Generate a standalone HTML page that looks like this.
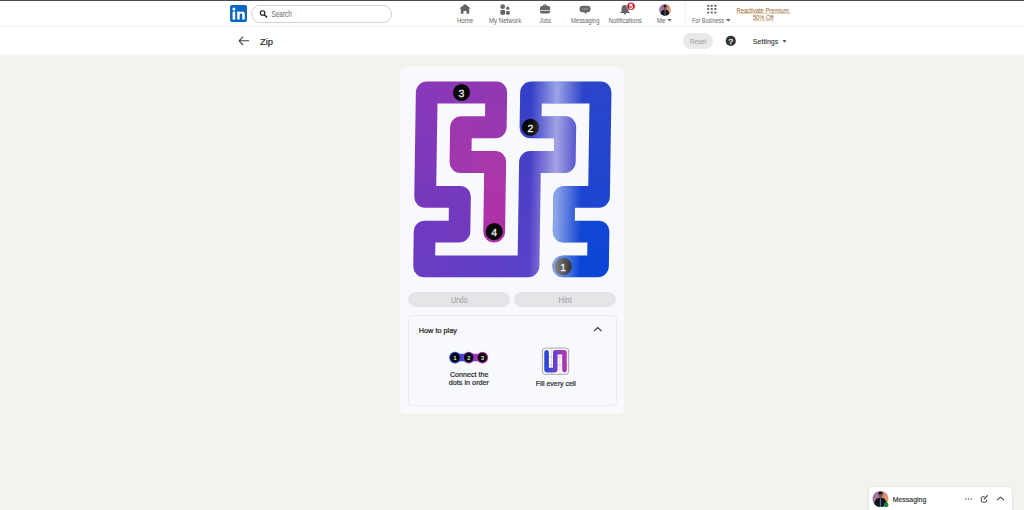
<!DOCTYPE html>
<html><head><meta charset="utf-8">
<style>
*{margin:0;padding:0;box-sizing:border-box}
html,body{width:1024px;height:510px;overflow:hidden;background:#f4f2ee;font-family:"Liberation Sans",sans-serif;position:relative}
.abs{position:absolute}
svg text{font-family:"Liberation Sans",sans-serif}
</style></head>
<body>
<div class="abs" style="left:0;top:0;width:1024px;height:1px;background:#4b4a50"></div>
<div class="abs" style="left:0;top:1px;width:1024px;height:26px;background:#fff;border-bottom:1px solid #f2f2f2"></div>
<div class="abs" style="left:0;top:27px;width:1024px;height:28px;background:#fff;border-bottom:1px solid #f8f7f5"></div>
<div class="abs" style="left:251px;top:5px;width:141px;height:18px;border:1px solid #d2d2d2;border-radius:9px;background:#fff"></div>
<div class="abs" style="left:400px;top:67px;width:224px;height:347px;background:#f7f9fc;border-radius:5px"></div>
<div class="abs" style="left:408.3px;top:291.5px;width:101.7px;height:15.6px;background:#e5e5e7;border-radius:8px"></div>
<div class="abs" style="left:514.4px;top:291.5px;width:101.6px;height:15.6px;background:#e5e5e7;border-radius:8px"></div>
<div class="abs" style="left:408px;top:315px;width:208.5px;height:90.5px;border:1px solid #ebecef;border-radius:3.5px"></div>
<div class="abs" style="left:869px;top:487px;width:143px;height:30px;background:#fff;border-radius:4px;box-shadow:0 0 2px rgba(0,0,0,0.2)"></div>
<div class="abs" style="left:683.4px;top:33px;width:29.4px;height:15.8px;border-radius:8px;background:#e9e9e9"></div>

<svg class="abs" style="left:0;top:0" width="1024" height="510" viewBox="0 0 1024 510">
<defs>
<linearGradient id="sky" x1="0" y1="0" x2="1" y2="0.5"><stop offset="0" stop-color="#6a70d0"/><stop offset="0.45" stop-color="#b87898"/><stop offset="1" stop-color="#f0a060"/></linearGradient>
<clipPath id="av1"><circle cx="665" cy="9.9" r="5.9"/></clipPath>
<clipPath id="av2"><circle cx="880.5" cy="499" r="8"/></clipPath>
<linearGradient id="cg" x1="0" x2="1"><stop offset="0" stop-color="#1a4ad8"/><stop offset="0.5" stop-color="#7040c8"/><stop offset="1" stop-color="#c030b0"/></linearGradient>
<linearGradient id="fg" gradientUnits="userSpaceOnUse" x1="544" y1="0" x2="567" y2="0"><stop offset="0" stop-color="#1e48d8"/><stop offset="0.5" stop-color="#7040c8"/><stop offset="1" stop-color="#c030b0"/></linearGradient>
</defs>

<!-- logo -->
<rect x="230" y="5" width="17" height="17" rx="2" fill="#0a66c2"/>
<rect x="232.6" y="11.6" width="2.6" height="8" fill="#fff"/>
<circle cx="233.9" cy="8.9" r="1.5" fill="#fff"/>
<path d="M237.2 11.6h2.5v1.1c0.5-0.8 1.4-1.3 2.5-1.3 2 0 2.6 1.2 2.6 3.2v5h-2.6v-4.4c0-1-0.2-1.7-1.1-1.7-1 0-1.4 0.7-1.4 1.8v4.3h-2.5z" fill="#fff"/>

<!-- search icon/text -->
<circle cx="262.6" cy="13.05" r="2.25" fill="none" stroke="#1a1a1a" stroke-width="1.1"/>
<path d="M264.4 14.8L266.6 17" stroke="#1a1a1a" stroke-width="1.4" stroke-linecap="round"/>
<text x="271.5" y="16.8" font-size="8.4" textLength="20.4" lengthAdjust="spacingAndGlyphs" fill="#666">Search</text>

<!-- nav icons -->
<g fill="#666">
<path d="M465 4.1 L470.8 8.4 L469.2 8.4 L469.2 13.8 L466.5 13.8 L466.5 10.9 L463.5 10.9 L463.5 13.8 L460.8 13.8 L460.8 8.4 L459.2 8.4 Z"/>
<circle cx="502.7" cy="6.7" r="2.4"/>
<circle cx="507.8" cy="8.2" r="1.6"/>
<rect x="500.4" y="10.1" width="4.7" height="4.6" rx="1.2"/>
<rect x="506" y="11" width="3.8" height="3.7" rx="1.1"/>
<path d="M542.9 6.6v-0.6c0-1 0.8-1.7 2.1-1.7s2.1 0.7 2.1 1.7v0.6h-1.1v-0.5c0-0.4-0.4-0.7-1-0.7s-1 0.3-1 0.7v0.5z"/>
<rect x="540" y="6.1" width="10.1" height="7.3" rx="1.6"/>
<rect x="579.5" y="5.8" width="11.1" height="6.5" rx="3.25"/>
<path d="M584.6 12h2.4l-2 2.3z"/>
<path d="M625 5c2.3 0 3.4 1.7 3.4 3.8v2.4l1.8 1.8h-10.4l1.8-1.8v-2.4c0-2.1 1.1-3.8 3.4-3.8z"/>
<rect x="624" y="13" width="2" height="1.4" rx="0.6"/>
<rect x="707.2" y="4.7" width="2" height="2" rx="0.5"/><rect x="710.7" y="4.7" width="2" height="2" rx="0.5"/><rect x="714.4" y="4.7" width="2" height="2" rx="0.5"/>
<rect x="707.2" y="8" width="2" height="2" rx="0.5"/><rect x="710.7" y="8" width="2" height="2" rx="0.5"/><rect x="714.4" y="8" width="2" height="2" rx="0.5"/>
<rect x="707.2" y="11.5" width="2" height="2" rx="0.5"/><rect x="710.7" y="11.5" width="2" height="2" rx="0.5"/><rect x="714.4" y="11.5" width="2" height="2" rx="0.5"/>
</g>
<path d="M581.9 9.1h6.1" stroke="#a8a8a8" stroke-width="1.3" stroke-dasharray="1.6 0.45"/>
<path d="M540 10.5h10.1" stroke="#fff" stroke-width="0.7"/>
<circle cx="631" cy="6.3" r="4.3" fill="#fff"/>
<circle cx="631" cy="6.3" r="3.8" fill="#cb112d"/>
<text x="631" y="8.85" text-anchor="middle" font-size="6.6" stroke="#fff" stroke-width="0.35" fill="#fff">5</text>
<g clip-path="url(#av1)">
<rect x="659" y="4" width="12" height="12" fill="url(#sky)"/>
<path d="M660.4 16.5c0-3.6 0.8-6 2.9-6.8h3.4c2.1 0.8 2.9 3.2 2.9 6.8z" fill="#141414"/>
<ellipse cx="665" cy="7.7" rx="1.5" ry="1.9" fill="#7a5a48"/>
<path d="M663.5 7c0-1.5 0.7-1.9 1.5-1.9s1.5 0.4 1.5 1.9z" fill="#1a1410"/>
<rect x="664.6" y="9.8" width="0.9" height="7" fill="#3d79b8"/>
</g>
<path d="M685.3 2.5V26" stroke="#ebebeb" stroke-width="1"/>
<path d="M667.3 19.1h4.4l-2.2 2.4z" fill="#666"/>
<path d="M726 19.1h4.6l-2.3 2.6z" fill="#666"/>
<g fill="#666" text-anchor="middle">
<text x="465" y="22.75" font-size="6.6" textLength="16.2" lengthAdjust="spacingAndGlyphs">Home</text>
<text x="505.1" y="22.75" font-size="6.6" textLength="32.2" lengthAdjust="spacingAndGlyphs">My Network</text>
<text x="545.2" y="22.75" font-size="6.6" textLength="11.6" lengthAdjust="spacingAndGlyphs">Jobs</text>
<text x="585.2" y="22.75" font-size="6.6" textLength="28.4" lengthAdjust="spacingAndGlyphs">Messaging</text>
<text x="625.2" y="22.75" font-size="6.6" textLength="33.5" lengthAdjust="spacingAndGlyphs">Notifications</text>
<text x="661.1" y="22.75" font-size="6.6" textLength="8.4" lengthAdjust="spacingAndGlyphs">Me</text>
<text x="708" y="22.65" font-size="6.6" textLength="32" lengthAdjust="spacingAndGlyphs">For Business</text>
</g>
<g fill="#94621f" text-anchor="middle" font-size="6.5">
<text x="763.35" y="12.6" textLength="53.7" lengthAdjust="spacingAndGlyphs">Reactivate Premium:</text>
<text x="763.3" y="19.7" textLength="20.8" lengthAdjust="spacingAndGlyphs">50% Off</text>
</g>
<path d="M736.5 13.5H790.2M752.9 20.7H773.7" stroke="#d4b58c" stroke-width="0.6"/>

<!-- sub header -->
<path d="M239 40.8H249M239 40.8L243.1 36.7M239 40.8L243.1 45" fill="none" stroke="#404040" stroke-width="1.1"/>
<text x="260" y="44.6" font-size="9.2" textLength="13" lengthAdjust="spacingAndGlyphs" stroke="#282828" stroke-width="0.18" fill="#282828">Zip</text>
<text x="698.1" y="44.2" text-anchor="middle" font-size="7.4" textLength="16.4" lengthAdjust="spacingAndGlyphs" fill="#9c9c9c">Reset</text>
<circle cx="730.75" cy="40.9" r="5.1" fill="#333"/>
<text x="730.75" y="43.6" text-anchor="middle" font-size="8" stroke="#fff" stroke-width="0.25" fill="#fff">?</text>
<text x="752.8" y="44.2" font-size="7.7" stroke="#333" stroke-width="0.12" textLength="25.5" lengthAdjust="spacingAndGlyphs" fill="#333">Settings</text>
<path d="M782.4 40.2h4.2l-2.1 2.3z" fill="#333"/>

<!-- buttons -->
<text x="459.3" y="302.9" text-anchor="middle" font-size="8.3" textLength="16.8" lengthAdjust="spacingAndGlyphs" fill="#999">Undo</text>
<text x="565.2" y="302.9" text-anchor="middle" font-size="8.3" textLength="13.2" lengthAdjust="spacingAndGlyphs" fill="#999">Hint</text>

<!-- how to play -->
<text x="418.8" y="332.9" font-size="7" textLength="38.1" lengthAdjust="spacingAndGlyphs" stroke="#222" stroke-width="0.2" fill="#222">How to play</text>
<path d="M594 331.2L597.8 327.6L601.6 331.2" fill="none" stroke="#333" stroke-width="1.1"/>

<rect x="455" y="353.8" width="27" height="7.5" fill="url(#cg)"/>
<circle cx="455" cy="357.6" r="5.8" fill="#1a4ad8"/>
<circle cx="468.7" cy="357.6" r="5.8" fill="#7a40c8"/>
<circle cx="482.4" cy="357.6" r="5.8" fill="#c030b0"/>
<circle cx="455" cy="357.6" r="4.8" fill="#080808"/>
<circle cx="468.7" cy="357.6" r="4.8" fill="#080808"/>
<circle cx="482.4" cy="357.6" r="4.8" fill="#080808"/>
<g font-size="5.4" fill="#eee" stroke="#eee" stroke-width="0.15" text-anchor="middle">
<text x="455" y="359.6">1</text><text x="468.7" y="359.6">2</text><text x="482.4" y="359.6">3</text></g>
<g fill="#2a2a2a" stroke="#2a2a2a" stroke-width="0.22" text-anchor="middle">
<text x="469.2" y="376.5" font-size="7.7" textLength="38.5" lengthAdjust="spacingAndGlyphs">Connect the</text>
<text x="468.9" y="384.6" font-size="7.7" textLength="40.2" lengthAdjust="spacingAndGlyphs">dots in order</text>
<text x="555.8" y="386.1" font-size="7.6" textLength="40.2" lengthAdjust="spacingAndGlyphs">Fill every cell</text>
</g>

<rect x="542.4" y="348.1" width="26.3" height="26.2" rx="3" fill="#fff" stroke="#8c8c8c" stroke-width="0.8"/>
<path d="M551.6 348.1V374.3M559.9 348.1V374.3M542.4 356.8H568.7M542.4 365.1H568.7" stroke="#b8b8b8" stroke-width="0.6"/>
<path d="M546.6 352.2V370.1H555.3V352.2H564.5V370.1" fill="none" stroke="url(#fg)" stroke-width="4.6" stroke-linejoin="round" stroke-linecap="round"/>

<!-- messaging -->
<g clip-path="url(#av2)">
<rect x="872" y="490" width="17" height="17" fill="url(#sky)"/>
<path d="M874 507.5c0-5 1-8.5 4-9.5h5c3 1 4 4.5 4 9.5z" fill="#141414"/>
<ellipse cx="880.5" cy="495.3" rx="2.1" ry="2.6" fill="#7a5a48"/>
<path d="M878.3 494.2c0-2 1-2.6 2.2-2.6s2.2 0.6 2.2 2.6z" fill="#1a1410"/>
<rect x="879.8" y="498.5" width="1.2" height="9" fill="#3d79b8"/>
</g>
<circle cx="886.2" cy="504.9" r="2.3" fill="#0f8a4c"/>
<text x="892.7" y="501.6" font-size="7.7" textLength="33.6" lengthAdjust="spacingAndGlyphs" stroke="#333" stroke-width="0.18" fill="#333">Messaging</text>
<g fill="#555"><circle cx="965.8" cy="499" r="0.75"/><circle cx="968.5" cy="499" r="0.75"/><circle cx="971.2" cy="499" r="0.75"/></g>
<path d="M984.6 496.7h-2.3a1 1 0 0 0-1 1v3.4a1 1 0 0 0 1 1h3.4a1 1 0 0 0 1-1v-1.6" fill="none" stroke="#444" stroke-width="1"/>
<path d="M984.2 498.9l3.3-3.3" stroke="#444" stroke-width="1.3" stroke-linecap="round"/>
<path d="M997.4 499.8l3.1-2.6 3.1 2.6" fill="none" stroke="#444" stroke-width="1.1" stroke-linecap="round" stroke-linejoin="round"/>
</svg>
<svg class="board" width="1024" height="510" viewBox="0 0 1024 510" style="position:absolute;left:0;top:0">
<defs>
<linearGradient id="shim" gradientUnits="userSpaceOnUse" x1="531" y1="0" x2="583" y2="0">
<stop offset="0" stop-color="#fff" stop-opacity="0"/>
<stop offset="0.5" stop-color="#fff" stop-opacity="0.52"/>
<stop offset="1" stop-color="#fff" stop-opacity="0"/>
</linearGradient>
<mask id="pm" maskUnits="userSpaceOnUse" x="0" y="0" width="1024" height="510">
<polyline points="565.79,266.30 600.55,266.30 600.55,231.54 565.79,231.54 565.79,196.78 600.55,196.78 600.55,162.02 600.55,127.26 600.55,92.50 565.79,92.50 531.03,92.50 531.03,127.26 565.79,127.26 565.79,162.02 531.03,162.02 531.03,196.78 531.03,231.54 531.03,266.30 496.27,266.30 461.51,266.30 426.75,266.30 426.75,231.54 461.51,231.54 461.51,196.78 426.75,196.78 426.75,162.02 426.75,127.26 426.75,92.50 461.51,92.50 496.27,92.50 496.27,127.26 461.51,127.26 461.51,162.02 496.27,162.02 496.27,196.78 496.27,231.54" fill="none" stroke="#fff" stroke-width="21.80" stroke-linejoin="round" stroke-linecap="round"/>
</mask>
</defs>
<g transform="matrix(1,0,-0.0150,1,1.387,0)">
<g mask="url(#pm)">
<polyline points="565.79,266.30 600.55,266.30 600.55,231.54 565.79,231.54 565.79,196.78 600.55,196.78 600.55,162.02 600.55,127.26 600.55,92.50 565.79,92.50 531.03,92.50 531.03,127.26 565.79,127.26 565.79,162.02 531.03,162.02 531.03,196.78 531.03,231.54 531.03,266.30 496.27,266.30 461.51,266.30 426.75,266.30 426.75,231.54 461.51,231.54 461.51,196.78 426.75,196.78 426.75,162.02 426.75,127.26 426.75,92.50 461.51,92.50 496.27,92.50 496.27,127.26 461.51,127.26 461.51,162.02 496.27,162.02 496.27,196.78 496.27,231.54" fill="none" stroke="#3a40c8" stroke-width="25.80" stroke-linejoin="round" stroke-linecap="round"/>
<g stroke-width="25.80" stroke-linecap="butt"><line x1="565.39" y1="266.30" x2="571.98" y2="266.30" stroke="#0846d6"/>
<line x1="571.18" y1="266.30" x2="577.78" y2="266.30" stroke="#0946d6"/>
<line x1="576.98" y1="266.30" x2="583.57" y2="266.30" stroke="#0a46d5"/>
<line x1="582.77" y1="266.30" x2="589.36" y2="266.30" stroke="#0a46d5"/>
<line x1="588.56" y1="266.30" x2="595.16" y2="266.30" stroke="#0b46d5"/>
<line x1="594.36" y1="266.30" x2="600.95" y2="266.30" stroke="#0c46d5"/>
<line x1="600.55" y1="266.70" x2="600.55" y2="260.11" stroke="#0d46d5"/>
<line x1="600.55" y1="260.91" x2="600.55" y2="254.31" stroke="#0d46d4"/>
<line x1="600.55" y1="255.11" x2="600.55" y2="248.52" stroke="#0e46d4"/>
<line x1="600.55" y1="249.32" x2="600.55" y2="242.73" stroke="#0f46d4"/>
<line x1="600.55" y1="243.53" x2="600.55" y2="236.93" stroke="#0f46d4"/>
<line x1="600.55" y1="237.73" x2="600.55" y2="231.14" stroke="#1046d4"/>
<line x1="600.95" y1="231.54" x2="594.36" y2="231.54" stroke="#1146d3"/>
<line x1="595.16" y1="231.54" x2="588.56" y2="231.54" stroke="#1246d3"/>
<line x1="589.36" y1="231.54" x2="582.77" y2="231.54" stroke="#1246d3"/>
<line x1="583.57" y1="231.54" x2="576.98" y2="231.54" stroke="#1346d3"/>
<line x1="577.78" y1="231.54" x2="571.18" y2="231.54" stroke="#1446d3"/>
<line x1="571.98" y1="231.54" x2="565.39" y2="231.54" stroke="#1446d2"/>
<line x1="565.79" y1="231.94" x2="565.79" y2="225.35" stroke="#1546d2"/>
<line x1="565.79" y1="226.15" x2="565.79" y2="219.55" stroke="#1646d2"/>
<line x1="565.79" y1="220.35" x2="565.79" y2="213.76" stroke="#1746d2"/>
<line x1="565.79" y1="214.56" x2="565.79" y2="207.97" stroke="#1746d2"/>
<line x1="565.79" y1="208.77" x2="565.79" y2="202.17" stroke="#1846d1"/>
<line x1="565.79" y1="202.97" x2="565.79" y2="196.38" stroke="#1946d1"/>
<line x1="565.39" y1="196.78" x2="571.98" y2="196.78" stroke="#1945d1"/>
<line x1="571.18" y1="196.78" x2="577.78" y2="196.78" stroke="#1a45d1"/>
<line x1="576.98" y1="196.78" x2="583.57" y2="196.78" stroke="#1b45d0"/>
<line x1="582.77" y1="196.78" x2="589.36" y2="196.78" stroke="#1b45d0"/>
<line x1="588.56" y1="196.78" x2="595.16" y2="196.78" stroke="#1c45d0"/>
<line x1="594.36" y1="196.78" x2="600.95" y2="196.78" stroke="#1d45d0"/>
<line x1="600.55" y1="197.18" x2="600.55" y2="190.59" stroke="#1e45d0"/>
<line x1="600.55" y1="191.39" x2="600.55" y2="184.79" stroke="#1e45cf"/>
<line x1="600.55" y1="185.59" x2="600.55" y2="179.00" stroke="#1f45cf"/>
<line x1="600.55" y1="179.80" x2="600.55" y2="173.21" stroke="#2045cf"/>
<line x1="600.55" y1="174.01" x2="600.55" y2="167.41" stroke="#2045cf"/>
<line x1="600.55" y1="168.21" x2="600.55" y2="161.62" stroke="#2145cf"/>
<line x1="600.55" y1="162.42" x2="600.55" y2="155.83" stroke="#2245ce"/>
<line x1="600.55" y1="156.63" x2="600.55" y2="150.03" stroke="#2345ce"/>
<line x1="600.55" y1="150.83" x2="600.55" y2="144.24" stroke="#2345ce"/>
<line x1="600.55" y1="145.04" x2="600.55" y2="138.45" stroke="#2445ce"/>
<line x1="600.55" y1="139.25" x2="600.55" y2="132.65" stroke="#2545ce"/>
<line x1="600.55" y1="133.45" x2="600.55" y2="126.86" stroke="#2545cd"/>
<line x1="600.55" y1="127.66" x2="600.55" y2="121.07" stroke="#2645cd"/>
<line x1="600.55" y1="121.87" x2="600.55" y2="115.27" stroke="#2745cd"/>
<line x1="600.55" y1="116.07" x2="600.55" y2="109.48" stroke="#2845cd"/>
<line x1="600.55" y1="110.28" x2="600.55" y2="103.69" stroke="#2845cd"/>
<line x1="600.55" y1="104.49" x2="600.55" y2="97.89" stroke="#2945cc"/>
<line x1="600.55" y1="98.69" x2="600.55" y2="92.10" stroke="#2a45cc"/>
<line x1="600.95" y1="92.50" x2="594.36" y2="92.50" stroke="#2a45cc"/>
<line x1="595.16" y1="92.50" x2="588.56" y2="92.50" stroke="#2b44cc"/>
<line x1="589.36" y1="92.50" x2="582.77" y2="92.50" stroke="#2c44cb"/>
<line x1="583.57" y1="92.50" x2="576.98" y2="92.50" stroke="#2d44cb"/>
<line x1="577.78" y1="92.50" x2="571.18" y2="92.50" stroke="#2e43ca"/>
<line x1="571.98" y1="92.50" x2="565.39" y2="92.50" stroke="#2f43ca"/>
<line x1="566.19" y1="92.50" x2="559.60" y2="92.50" stroke="#3042ca"/>
<line x1="560.40" y1="92.50" x2="553.80" y2="92.50" stroke="#3142ca"/>
<line x1="554.60" y1="92.50" x2="548.01" y2="92.50" stroke="#3241c9"/>
<line x1="548.81" y1="92.50" x2="542.22" y2="92.50" stroke="#3341c9"/>
<line x1="543.02" y1="92.50" x2="536.42" y2="92.50" stroke="#3441c8"/>
<line x1="537.22" y1="92.50" x2="530.63" y2="92.50" stroke="#3540c8"/>
<line x1="531.03" y1="92.10" x2="531.03" y2="98.69" stroke="#3540c8"/>
<line x1="531.03" y1="97.89" x2="531.03" y2="104.49" stroke="#3640c8"/>
<line x1="531.03" y1="103.69" x2="531.03" y2="110.28" stroke="#3740c8"/>
<line x1="531.03" y1="109.48" x2="531.03" y2="116.07" stroke="#3840c8"/>
<line x1="531.03" y1="115.27" x2="531.03" y2="121.87" stroke="#3940c8"/>
<line x1="531.03" y1="121.07" x2="531.03" y2="127.66" stroke="#3a40c8"/>
<line x1="530.63" y1="127.26" x2="537.22" y2="127.26" stroke="#3a40c8"/>
<line x1="536.42" y1="127.26" x2="543.02" y2="127.26" stroke="#3b40c8"/>
<line x1="542.22" y1="127.26" x2="548.81" y2="127.26" stroke="#3c40c8"/>
<line x1="548.01" y1="127.26" x2="554.60" y2="127.26" stroke="#3d40c8"/>
<line x1="553.80" y1="127.26" x2="560.40" y2="127.26" stroke="#3e40c8"/>
<line x1="559.60" y1="127.26" x2="566.19" y2="127.26" stroke="#3f40c8"/>
<line x1="565.79" y1="126.86" x2="565.79" y2="133.45" stroke="#3f40c8"/>
<line x1="565.79" y1="132.65" x2="565.79" y2="139.25" stroke="#4040c8"/>
<line x1="565.79" y1="138.45" x2="565.79" y2="145.04" stroke="#4140c8"/>
<line x1="565.79" y1="144.24" x2="565.79" y2="150.83" stroke="#4240c8"/>
<line x1="565.79" y1="150.03" x2="565.79" y2="156.63" stroke="#4340c8"/>
<line x1="565.79" y1="155.83" x2="565.79" y2="162.42" stroke="#4440c8"/>
<line x1="566.19" y1="162.02" x2="559.60" y2="162.02" stroke="#4440c8"/>
<line x1="560.40" y1="162.02" x2="553.80" y2="162.02" stroke="#4540c8"/>
<line x1="554.60" y1="162.02" x2="548.01" y2="162.02" stroke="#4640c8"/>
<line x1="548.81" y1="162.02" x2="542.22" y2="162.02" stroke="#4740c8"/>
<line x1="543.02" y1="162.02" x2="536.42" y2="162.02" stroke="#4840c8"/>
<line x1="537.22" y1="162.02" x2="530.63" y2="162.02" stroke="#4940c8"/>
<line x1="531.03" y1="161.62" x2="531.03" y2="168.21" stroke="#4940c8"/>
<line x1="531.03" y1="167.41" x2="531.03" y2="174.01" stroke="#4a40c8"/>
<line x1="531.03" y1="173.21" x2="531.03" y2="179.80" stroke="#4b40c8"/>
<line x1="531.03" y1="179.00" x2="531.03" y2="185.59" stroke="#4c40c8"/>
<line x1="531.03" y1="184.79" x2="531.03" y2="191.39" stroke="#4d40c8"/>
<line x1="531.03" y1="190.59" x2="531.03" y2="197.18" stroke="#4e40c8"/>
<line x1="531.03" y1="196.38" x2="531.03" y2="202.97" stroke="#4e40c8"/>
<line x1="531.03" y1="202.17" x2="531.03" y2="208.77" stroke="#4f40c8"/>
<line x1="531.03" y1="207.97" x2="531.03" y2="214.56" stroke="#5040c8"/>
<line x1="531.03" y1="213.76" x2="531.03" y2="220.35" stroke="#5140c8"/>
<line x1="531.03" y1="219.55" x2="531.03" y2="226.15" stroke="#5240c8"/>
<line x1="531.03" y1="225.35" x2="531.03" y2="231.94" stroke="#5340c8"/>
<line x1="531.03" y1="231.14" x2="531.03" y2="237.73" stroke="#5340c8"/>
<line x1="531.03" y1="236.93" x2="531.03" y2="243.53" stroke="#5440c8"/>
<line x1="531.03" y1="242.73" x2="531.03" y2="249.32" stroke="#5540c8"/>
<line x1="531.03" y1="248.52" x2="531.03" y2="255.11" stroke="#5640c8"/>
<line x1="531.03" y1="254.31" x2="531.03" y2="260.91" stroke="#5740c8"/>
<line x1="531.03" y1="260.11" x2="531.03" y2="266.70" stroke="#5840c8"/>
<line x1="531.43" y1="266.30" x2="524.84" y2="266.30" stroke="#5840c8"/>
<line x1="525.64" y1="266.30" x2="519.04" y2="266.30" stroke="#5a40c8"/>
<line x1="519.84" y1="266.30" x2="513.25" y2="266.30" stroke="#5a3fc7"/>
<line x1="514.05" y1="266.30" x2="507.46" y2="266.30" stroke="#5c3fc7"/>
<line x1="508.26" y1="266.30" x2="501.66" y2="266.30" stroke="#5c3fc6"/>
<line x1="502.46" y1="266.30" x2="495.87" y2="266.30" stroke="#5e3fc6"/>
<line x1="496.67" y1="266.30" x2="490.08" y2="266.30" stroke="#5e3fc6"/>
<line x1="490.88" y1="266.30" x2="484.28" y2="266.30" stroke="#603ec6"/>
<line x1="485.08" y1="266.30" x2="478.49" y2="266.30" stroke="#603ec5"/>
<line x1="479.29" y1="266.30" x2="472.70" y2="266.30" stroke="#623ec5"/>
<line x1="473.50" y1="266.30" x2="466.90" y2="266.30" stroke="#623ec4"/>
<line x1="467.70" y1="266.30" x2="461.11" y2="266.30" stroke="#643dc4"/>
<line x1="461.91" y1="266.30" x2="455.32" y2="266.30" stroke="#643dc4"/>
<line x1="456.12" y1="266.30" x2="449.52" y2="266.30" stroke="#663dc4"/>
<line x1="450.32" y1="266.30" x2="443.73" y2="266.30" stroke="#663dc3"/>
<line x1="444.53" y1="266.30" x2="437.94" y2="266.30" stroke="#683dc3"/>
<line x1="438.74" y1="266.30" x2="432.14" y2="266.30" stroke="#683cc2"/>
<line x1="432.94" y1="266.30" x2="426.35" y2="266.30" stroke="#6a3cc2"/>
<line x1="426.75" y1="266.70" x2="426.75" y2="260.11" stroke="#6a3cc2"/>
<line x1="426.75" y1="260.91" x2="426.75" y2="254.31" stroke="#6b3cc2"/>
<line x1="426.75" y1="255.11" x2="426.75" y2="248.52" stroke="#6b3cc1"/>
<line x1="426.75" y1="249.32" x2="426.75" y2="242.73" stroke="#6c3bc1"/>
<line x1="426.75" y1="243.53" x2="426.75" y2="236.93" stroke="#6d3bc1"/>
<line x1="426.75" y1="237.73" x2="426.75" y2="231.14" stroke="#6d3bc1"/>
<line x1="426.35" y1="231.54" x2="432.94" y2="231.54" stroke="#6e3bc0"/>
<line x1="432.14" y1="231.54" x2="438.74" y2="231.54" stroke="#6e3bc0"/>
<line x1="437.94" y1="231.54" x2="444.53" y2="231.54" stroke="#6f3bc0"/>
<line x1="443.73" y1="231.54" x2="450.32" y2="231.54" stroke="#703ac0"/>
<line x1="449.52" y1="231.54" x2="456.12" y2="231.54" stroke="#703abf"/>
<line x1="455.32" y1="231.54" x2="461.91" y2="231.54" stroke="#713abf"/>
<line x1="461.51" y1="231.94" x2="461.51" y2="225.35" stroke="#713abf"/>
<line x1="461.51" y1="226.15" x2="461.51" y2="219.55" stroke="#723abf"/>
<line x1="461.51" y1="220.35" x2="461.51" y2="213.76" stroke="#723abe"/>
<line x1="461.51" y1="214.56" x2="461.51" y2="207.97" stroke="#7339be"/>
<line x1="461.51" y1="208.77" x2="461.51" y2="202.17" stroke="#7439be"/>
<line x1="461.51" y1="202.97" x2="461.51" y2="196.38" stroke="#7439be"/>
<line x1="461.91" y1="196.78" x2="455.32" y2="196.78" stroke="#7539bd"/>
<line x1="456.12" y1="196.78" x2="449.52" y2="196.78" stroke="#7539bd"/>
<line x1="450.32" y1="196.78" x2="443.73" y2="196.78" stroke="#7639bd"/>
<line x1="444.53" y1="196.78" x2="437.94" y2="196.78" stroke="#7738bd"/>
<line x1="438.74" y1="196.78" x2="432.14" y2="196.78" stroke="#7738bc"/>
<line x1="432.94" y1="196.78" x2="426.35" y2="196.78" stroke="#7838bc"/>
<line x1="426.75" y1="197.18" x2="426.75" y2="190.59" stroke="#7838bc"/>
<line x1="426.75" y1="191.39" x2="426.75" y2="184.79" stroke="#7938bc"/>
<line x1="426.75" y1="185.59" x2="426.75" y2="179.00" stroke="#7a38bb"/>
<line x1="426.75" y1="179.80" x2="426.75" y2="173.21" stroke="#7b38bb"/>
<line x1="426.75" y1="174.01" x2="426.75" y2="167.41" stroke="#7c38bb"/>
<line x1="426.75" y1="168.21" x2="426.75" y2="161.62" stroke="#7d38bb"/>
<line x1="426.75" y1="162.42" x2="426.75" y2="155.83" stroke="#7e38bb"/>
<line x1="426.75" y1="156.63" x2="426.75" y2="150.03" stroke="#7f38ba"/>
<line x1="426.75" y1="150.83" x2="426.75" y2="144.24" stroke="#8038ba"/>
<line x1="426.75" y1="145.04" x2="426.75" y2="138.45" stroke="#8038ba"/>
<line x1="426.75" y1="139.25" x2="426.75" y2="132.65" stroke="#8138ba"/>
<line x1="426.75" y1="133.45" x2="426.75" y2="126.86" stroke="#8238b9"/>
<line x1="426.75" y1="127.66" x2="426.75" y2="121.07" stroke="#8338b9"/>
<line x1="426.75" y1="121.87" x2="426.75" y2="115.27" stroke="#8438b9"/>
<line x1="426.75" y1="116.07" x2="426.75" y2="109.48" stroke="#8538b9"/>
<line x1="426.75" y1="110.28" x2="426.75" y2="103.69" stroke="#8638b9"/>
<line x1="426.75" y1="104.49" x2="426.75" y2="97.89" stroke="#8738b8"/>
<line x1="426.75" y1="98.69" x2="426.75" y2="92.10" stroke="#8838b8"/>
<line x1="426.35" y1="92.50" x2="432.94" y2="92.50" stroke="#8838b8"/>
<line x1="432.14" y1="92.50" x2="438.74" y2="92.50" stroke="#8938b7"/>
<line x1="437.94" y1="92.50" x2="444.53" y2="92.50" stroke="#8a38b7"/>
<line x1="443.73" y1="92.50" x2="450.32" y2="92.50" stroke="#8b38b6"/>
<line x1="449.52" y1="92.50" x2="456.12" y2="92.50" stroke="#8c38b6"/>
<line x1="455.32" y1="92.50" x2="461.91" y2="92.50" stroke="#8d38b5"/>
<line x1="461.11" y1="92.50" x2="467.70" y2="92.50" stroke="#8d38b5"/>
<line x1="466.90" y1="92.50" x2="473.50" y2="92.50" stroke="#8e38b4"/>
<line x1="472.70" y1="92.50" x2="479.29" y2="92.50" stroke="#8f38b4"/>
<line x1="478.49" y1="92.50" x2="485.08" y2="92.50" stroke="#9038b3"/>
<line x1="484.28" y1="92.50" x2="490.88" y2="92.50" stroke="#9138b3"/>
<line x1="490.08" y1="92.50" x2="496.67" y2="92.50" stroke="#9238b2"/>
<line x1="496.27" y1="92.10" x2="496.27" y2="98.69" stroke="#9238b2"/>
<line x1="496.27" y1="97.89" x2="496.27" y2="104.49" stroke="#9338b2"/>
<line x1="496.27" y1="103.69" x2="496.27" y2="110.28" stroke="#9438b1"/>
<line x1="496.27" y1="109.48" x2="496.27" y2="116.07" stroke="#9538b1"/>
<line x1="496.27" y1="115.27" x2="496.27" y2="121.87" stroke="#9638b1"/>
<line x1="496.27" y1="121.07" x2="496.27" y2="127.66" stroke="#9738b0"/>
<line x1="496.67" y1="127.26" x2="490.08" y2="127.26" stroke="#9838b0"/>
<line x1="490.88" y1="127.26" x2="484.28" y2="127.26" stroke="#9938b0"/>
<line x1="485.08" y1="127.26" x2="478.49" y2="127.26" stroke="#9a38b0"/>
<line x1="479.29" y1="127.26" x2="472.70" y2="127.26" stroke="#9b38af"/>
<line x1="473.50" y1="127.26" x2="466.90" y2="127.26" stroke="#9c38af"/>
<line x1="467.70" y1="127.26" x2="461.11" y2="127.26" stroke="#9d38af"/>
<line x1="461.51" y1="126.86" x2="461.51" y2="133.45" stroke="#9d38ae"/>
<line x1="461.51" y1="132.65" x2="461.51" y2="139.25" stroke="#9e38ae"/>
<line x1="461.51" y1="138.45" x2="461.51" y2="145.04" stroke="#9f38ae"/>
<line x1="461.51" y1="144.24" x2="461.51" y2="150.83" stroke="#a038ad"/>
<line x1="461.51" y1="150.03" x2="461.51" y2="156.63" stroke="#a138ad"/>
<line x1="461.51" y1="155.83" x2="461.51" y2="162.42" stroke="#a238ad"/>
<line x1="461.11" y1="162.02" x2="467.70" y2="162.02" stroke="#a338ad"/>
<line x1="466.90" y1="162.02" x2="473.50" y2="162.02" stroke="#a438ac"/>
<line x1="472.70" y1="162.02" x2="479.29" y2="162.02" stroke="#a538ac"/>
<line x1="478.49" y1="162.02" x2="485.08" y2="162.02" stroke="#a638ac"/>
<line x1="484.28" y1="162.02" x2="490.88" y2="162.02" stroke="#a738ab"/>
<line x1="490.08" y1="162.02" x2="496.67" y2="162.02" stroke="#a838ab"/>
<line x1="496.27" y1="161.62" x2="496.27" y2="168.21" stroke="#a838ab"/>
<line x1="496.27" y1="167.41" x2="496.27" y2="174.01" stroke="#a937ab"/>
<line x1="496.27" y1="173.21" x2="496.27" y2="179.80" stroke="#aa36aa"/>
<line x1="496.27" y1="179.00" x2="496.27" y2="185.59" stroke="#aa36aa"/>
<line x1="496.27" y1="184.79" x2="496.27" y2="191.39" stroke="#ab35aa"/>
<line x1="496.27" y1="190.59" x2="496.27" y2="197.18" stroke="#ac34aa"/>
<line x1="496.27" y1="196.38" x2="496.27" y2="202.97" stroke="#ac34a9"/>
<line x1="496.27" y1="202.17" x2="496.27" y2="208.77" stroke="#ad33a9"/>
<line x1="496.27" y1="207.97" x2="496.27" y2="214.56" stroke="#ae32a9"/>
<line x1="496.27" y1="213.76" x2="496.27" y2="220.35" stroke="#ae32a9"/>
<line x1="496.27" y1="219.55" x2="496.27" y2="226.15" stroke="#af31a8"/>
<line x1="496.27" y1="225.35" x2="496.27" y2="231.94" stroke="#b030a8"/></g>
<circle cx="565.79" cy="266.30" r="12.90" fill="#0846d6"/>
<circle cx="600.55" cy="266.30" r="12.90" fill="#0c46d5"/>
<circle cx="600.55" cy="231.54" r="12.90" fill="#1046d4"/>
<circle cx="565.79" cy="231.54" r="12.90" fill="#1546d2"/>
<circle cx="565.79" cy="196.78" r="12.90" fill="#1946d1"/>
<circle cx="600.55" cy="196.78" r="12.90" fill="#1d45d0"/>
<circle cx="600.55" cy="92.50" r="12.90" fill="#2a45cc"/>
<circle cx="531.03" cy="92.50" r="12.90" fill="#3540c8"/>
<circle cx="531.03" cy="127.26" r="12.90" fill="#3a40c8"/>
<circle cx="565.79" cy="127.26" r="12.90" fill="#3f40c8"/>
<circle cx="565.79" cy="162.02" r="12.90" fill="#4440c8"/>
<circle cx="531.03" cy="162.02" r="12.90" fill="#4940c8"/>
<circle cx="531.03" cy="266.30" r="12.90" fill="#5840c8"/>
<circle cx="426.75" cy="266.30" r="12.90" fill="#6a3cc2"/>
<circle cx="426.75" cy="231.54" r="12.90" fill="#6e3bc0"/>
<circle cx="461.51" cy="231.54" r="12.90" fill="#713abf"/>
<circle cx="461.51" cy="196.78" r="12.90" fill="#7439be"/>
<circle cx="426.75" cy="196.78" r="12.90" fill="#7838bc"/>
<circle cx="426.75" cy="92.50" r="12.90" fill="#8838b8"/>
<circle cx="496.27" cy="92.50" r="12.90" fill="#9238b2"/>
<circle cx="496.27" cy="127.26" r="12.90" fill="#9838b0"/>
<circle cx="461.51" cy="127.26" r="12.90" fill="#9d38ae"/>
<circle cx="461.51" cy="162.02" r="12.90" fill="#a238ad"/>
<circle cx="496.27" cy="162.02" r="12.90" fill="#a838ab"/>
<circle cx="496.27" cy="231.54" r="12.90" fill="#b030a8"/>
</g>
<circle cx="565.79" cy="266.30" r="8.6" fill="#070707"/>
<circle cx="531.03" cy="127.26" r="8.6" fill="#070707"/>
<circle cx="461.51" cy="92.50" r="8.6" fill="#070707"/>
<circle cx="496.27" cy="231.54" r="8.6" fill="#070707"/>
<rect x="400" y="60" width="224" height="240" fill="url(#shim)" mask="url(#pm)"/>
<text x="565.79" y="270.70" text-anchor="middle" font-family="Liberation Sans" font-size="10.3" fill="#f0f0f0" stroke="#f0f0f0" stroke-width="0.3">1</text>
<text x="531.03" y="131.66" text-anchor="middle" font-family="Liberation Sans" font-size="10.3" fill="#f0f0f0" stroke="#f0f0f0" stroke-width="0.3">2</text>
<text x="461.51" y="96.90" text-anchor="middle" font-family="Liberation Sans" font-size="10.3" fill="#f0f0f0" stroke="#f0f0f0" stroke-width="0.3">3</text>
<text x="496.27" y="235.94" text-anchor="middle" font-family="Liberation Sans" font-size="10.3" fill="#f0f0f0" stroke="#f0f0f0" stroke-width="0.3">4</text>
</g>
</svg>
</body></html>
